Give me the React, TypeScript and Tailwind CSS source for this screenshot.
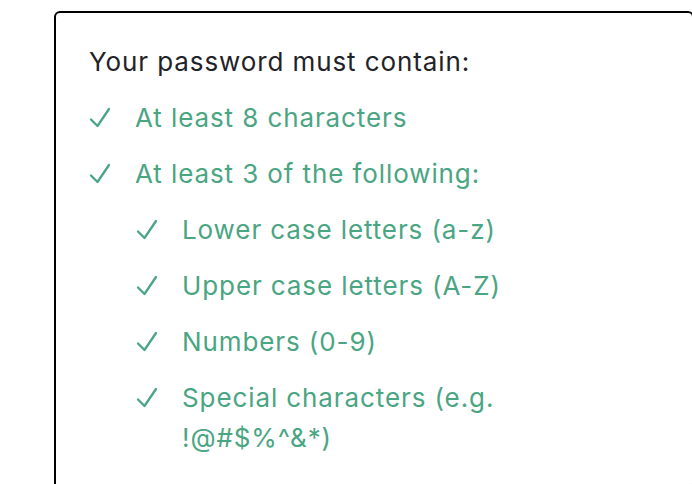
import React from "react";

const Check = () => (
  <svg width="22" height="21" viewBox="0 0 22 21" className="shrink-0 mt-[9px]" fill="none">
    <path d="M2 12.5 L8.5 19 L20 2" stroke="#4aa583" strokeWidth="2.3" strokeLinecap="round" strokeLinejoin="round" />
  </svg>
);

const Row = ({ children }: { children: React.ReactNode }) => (
  <div className="flex gap-[24px]">
    <Check />
    <span>{children}</span>
  </div>
);

export default function App() {
  return (
    <div className="w-[692px] h-[484px] overflow-hidden bg-white" style={{ fontFamily: "Inter, 'Noto Sans', sans-serif" }}>
      <div className="ml-[54px] mt-[11px] w-[640px] h-[478px] border-2 border-black rounded-[6px] pl-[33px] pt-[29px]">
        <div className="w-[480px] text-[26px] leading-[40px] tracking-[0.9px]">
          <div className="text-[#1f2328]">Your password must contain:</div>
          <div className="mt-[16px] flex flex-col gap-[16px] text-[#4aa583]">
            <Row>At least 8 characters</Row>
            <Row>At least 3 of the following:</Row>
            <div className="ml-[47px] flex flex-col gap-[16px]">
              <Row>Lower case letters (a-z)</Row>
              <Row>Upper case letters (A-Z)</Row>
              <Row>Numbers (0-9)</Row>
              <Row>Special characters (e.g. !@#$%^&amp;*)</Row>
            </div>
          </div>
        </div>
      </div>
    </div>
  );
}
